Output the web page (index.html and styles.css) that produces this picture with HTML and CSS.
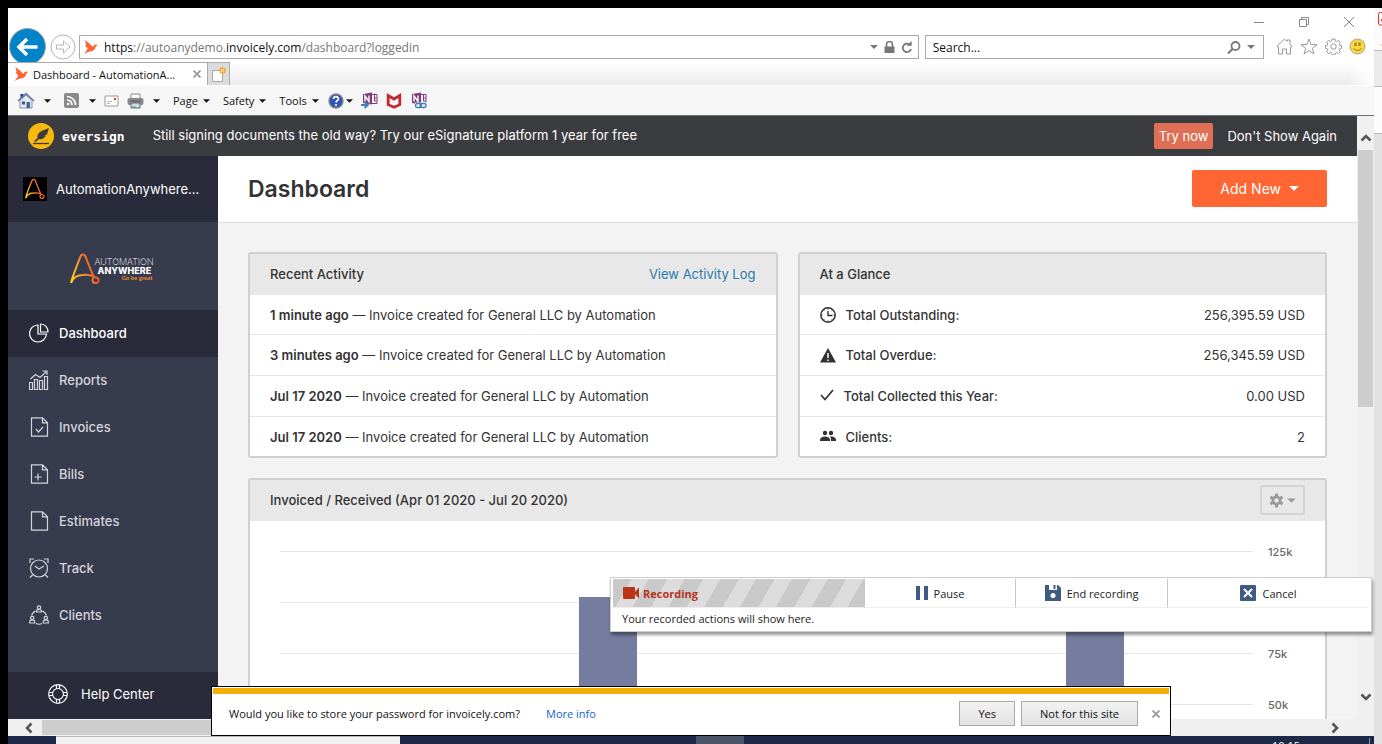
FILE: index.html
```html
<!DOCTYPE html>
<html lang="en">
<head>
<meta charset="utf-8">
<title>Dashboard - AutomationAnywhere</title>
<link rel="stylesheet" href="styles.css">
</head>
<body>
<svg class="defs" aria-hidden="true">
  <defs>
    <linearGradient id="flame" x1="0" y1="1" x2="1" y2="0.6"><stop offset="0" stop-color="#ffd21c"/><stop offset="0.5" stop-color="#f7902b"/><stop offset="1" stop-color="#ee4a23"/></linearGradient>
    <symbol id="caret" viewBox="0 0 8 4"><path d="M0 0h8L4 4z" fill="currentColor"/></symbol>
    <symbol id="bird" viewBox="0 0 14 14"><path d="M1 0l5 4 3 3 1-2 2-.5 2 .8-2 .7-1 3-2.500 2L4 12 0 14l3-4 .5-2L1 6l1-1z" fill="#ff6434"/></symbol>
    <symbol id="anywhere" viewBox="0 0 30 32"><path d="M1 30C2 25 9 7 11 2.500q2-2 4 0C17 7 21 18 24 24M1 30q3-8 12-8 7-1 13 2.500c4 1 3 6-.5 5.500-3 0-4-3-1.500-6" fill="none" stroke="url(#flame)" stroke-width="2"/></symbol>
    <symbol id="onenote" viewBox="0 0 17 17"><path d="M2 2l9-1.500v12L2 11z" fill="#80397b"/><path d="M4 9.500V4l4 5.500V3.500" fill="none" stroke="#fff" stroke-width="1.400"/><path d="M11 2.500h5v9h-5M13.500 3v3h2M13.500 6v3h2" fill="none" stroke="#80397b"/></symbol>
  </defs>
</svg>
<div class="desktop">
  <div class="window">
    <header class="caption">
      <button aria-label="Minimize"><svg width="12" height="12" viewBox="0 0 12 12"><path d="M1 6.500h10" stroke="#888"/></svg></button>
      <button aria-label="Restore"><svg width="12" height="12" viewBox="0 0 12 12" fill="none" stroke="#888"><path d="M1.500 3.500h7v7h-7zM3.500 3V1.500h7v7H9"/></svg></button>
      <button aria-label="Close"><svg width="12" height="12" viewBox="0 0 12 12"><path d="M1 1l10 10M11 1L1 11" stroke="#888"/></svg></button>
    </header>
    <div class="navrow">
      <button class="back" aria-label="Back"><svg width="39" height="34" viewBox="0 0 39 34"><circle cx="19.500" cy="18.500" r="18" fill="#0083c7" stroke="#a5a5a5"/><path d="M29.500 19H12M19 11l-8 8 8 8" fill="none" stroke="#fff" stroke-width="3.500"/></svg></button>
      <button class="forward" aria-label="Forward"><svg width="26" height="26" viewBox="0 0 26 26" fill="none" stroke="#b4b4b4"><circle cx="13" cy="13" r="12"/><path d="M6.500 11h7V7l6.500 6-6.500 6v-4h-7z"/></svg></button>
      <div class="field address">
        <svg width="14" height="14"><use href="#bird"/></svg>
        <span class="url"><b>https</b>://autoanydemo.<b>invoicely.com</b>/dashboard?loggedin</span>
        <button aria-label="Show address list"><svg width="8" height="4"><use href="#caret"/></svg></button>
        <svg width="11" height="12" viewBox="0 0 11 12"><path d="M2.500 6V3.500a3 3 0 016 0V6" fill="none" stroke="#777" stroke-width="1.600"/><path d="M.5 5.500h10V12H.5z" fill="#777"/></svg>
        <button aria-label="Refresh"><svg width="12" height="13" viewBox="0 0 12 13"><path d="M9 4A4.200 4.200 0 1010 8" fill="none" stroke="#777" stroke-width="1.800"/><path d="M5.500 4.800h5.200V0z" fill="#777"/></svg></button>
      </div>
      <div class="field search">
        <input type="text" placeholder="Search..." aria-label="Search">
        <button aria-label="Search"><svg width="14" height="13" viewBox="0 0 14 13"><circle cx="8.500" cy="5" r="4" fill="none" stroke="#777" stroke-width="1.800"/><path d="M5.500 8L1 12.500" stroke="#777" stroke-width="2"/></svg></button>
        <button aria-label="Search options"><svg width="8" height="4"><use href="#caret"/></svg></button>
      </div>
      <div class="tools">
        <button aria-label="Home"><svg width="17" height="17" viewBox="0 0 17 17" fill="none" stroke="#999"><path d="M2.500 9L.8 8.500 8.500 1l2.500 2.500V2h3v4.500l2.200 2-1.700.5v7h-4v-5h-4v5h-4z"/></svg></button>
        <button aria-label="Favorites"><svg width="18" height="17" viewBox="0 0 18 17" fill="none" stroke="#999"><path d="M9 1l2 5.500 6 .2-4.700 3.700L14 16l-5-3.300L4 16l1.700-5.600L1 6.700l6-.2z"/></svg></button>
        <button aria-label="Settings"><svg width="17" height="17" viewBox="0 0 17 17" fill="none" stroke="#999"><circle cx="8.500" cy="8.500" r="2.700"/><path d="M7 1h3l.4 2 1.200.6 1.800-1.200 1.900 2-1.100 1.700.5 1.200 1.900.4v2.500l-2 .5-.5 1.200 1.100 1.800-1.900 1.900-1.700-1.100-1.200.5-.4 1.900H7l-.4-2-1.200-.4-1.800 1.100-1.900-2 1.100-1.700-.5-1.200-1.900-.4V7.700l2-.5.5-1.200-1.100-1.700 1.900-1.900 1.700 1.100 1.200-.5z"/></svg></button>
        <button aria-label="Feedback"><svg width="17" height="17" viewBox="0 0 17 17"><circle cx="8.500" cy="8.500" r="7.500" fill="#fad73c" stroke="#a9a48c"/><path d="M6 4.500V8M7 4.500V8M10 4.500V8M11 4.500V8" stroke="#77652a" stroke-width=".9"/><path d="M4.500 10.500q4 4 8 0" fill="none" stroke="#8d7420"/></svg></button>
      </div>
    </div>
    <div class="tabs">
      <div class="tab"><svg width="15" height="14"><use href="#bird"/></svg><span>Dashboard - AutomationA...</span><button aria-label="Close tab"><svg width="8" height="8" viewBox="0 0 8 8"><path d="M.5.5l7 7M7.500.5l-7 7" stroke="#999" stroke-width="1.800"/></svg></button></div>
      <button class="newtab" aria-label="New tab"><svg width="16" height="17" viewBox="0 0 16 17"><path d="M1.500 4.500h10v11h-10z" fill="#fdfdfd" stroke="#aaa"/><path d="M11.500 1v7M8 4.500h7M9 2l5 5M14 2L9 7" stroke="#f0a01c" stroke-width="1.300"/><circle cx="11.500" cy="4.500" r="1.500" fill="#ffe28a"/></svg></button>
    </div>
    <div class="commands">
      <button class="wide" aria-label="Home page"><svg width="18" height="18" viewBox="0 0 18 18"><path d="M3.500 2h3v4h-3z" fill="#1f2fd0"/><path d="M3 8.500L9 3l6 5.500V16H3z" fill="#e6eaf1" stroke="#8091ad"/><path d="M1 9l8-7.500L17 9" fill="none" stroke="#6478a6" stroke-width="1.500"/><path d="M9.500 10H13v6H9.500z" fill="#4d6492"/><path d="M5 9.500h3v3H5z" fill="#38528d"/></svg><svg width="7" height="4"><use href="#caret"/></svg></button>
      <button class="wide feed" aria-label="Feeds"><svg width="15" height="15" viewBox="0 0 15 15"><rect width="15" height="15" rx="2" fill="#8a8a8a"/><g fill="none" stroke="#fff" stroke-width="1.700"><path d="M3 3.500a8.500 8.500 0 018.500 8.500M3 7a5 5 0 015 5"/></g><circle cx="4.200" cy="11" r="1.300" fill="#fff"/></svg><svg width="7" height="4"><use href="#caret"/></svg></button>
      <button class="mail" aria-label="Read mail"><svg width="15" height="12" viewBox="0 0 15 12"><path d="M1 1h13v10H1z" fill="#fff" stroke="#999"/><path d="M10 3h2v2h-2z" fill="#e02c2c"/><path d="M3 6.500h5M3 8.500h3" stroke="#b8b8b8"/></svg></button>
      <button class="wide print" aria-label="Print"><svg width="17" height="16" viewBox="0 0 17 16"><path d="M4 1h9v5H4z" fill="#fff" stroke="#888"/><rect x=".5" y="5" width="16" height="7" rx="2" fill="#8b8b8b"/><path d="M3 8h11" stroke="#555"/><path d="M4 10h9v5H4z" fill="#c9dde9" stroke="#666"/><path d="M5.500 14h3" stroke="#3f9e45"/></svg><svg width="7" height="4"><use href="#caret"/></svg></button>
      <button>Page<svg width="7" height="4"><use href="#caret"/></svg></button>
      <button>Safety<svg width="7" height="4"><use href="#caret"/></svg></button>
      <button>Tools<svg width="7" height="4"><use href="#caret"/></svg></button>
      <button class="help" aria-label="Help"><svg width="16" height="16" viewBox="0 0 16 16"><circle cx="8" cy="8" r="7" fill="#2c56b2" stroke="#888" stroke-width="1.400"/><path d="M5.500 6a2.500 2.300 0 115 0c0 1.500-2.500 1.500-2.500 3.500M8 11v2" fill="none" stroke="#fff" stroke-width="1.700"/></svg><svg width="7" height="4"><use href="#caret"/></svg></button>
      <button class="addon" aria-label="Send to OneNote"><svg width="17" height="17" viewBox="0 0 17 17"><use href="#onenote"/><path d="M0 13h6M3.500 10l3.500 3-3.500 3" fill="none" stroke="#3f7fb8" stroke-width="1.800"/></svg></button>
      <button class="addon" aria-label="WebAdvisor"><svg width="16" height="16" viewBox="0 0 16 16"><path d="M2.200 2.500v9.200L8 14.200l5.800-2.500V2.500L8 6z" fill="none" stroke="#c32a30" stroke-width="2.800"/></svg></button>
      <button class="addon" aria-label="Linked notes"><svg width="17" height="17" viewBox="0 0 17 17"><use href="#onenote"/><path d="M5 10.500h12V17H5z" fill="#f6f6f6"/><g fill="none" stroke="#3f7fb8" stroke-width="1.300"><rect x="5.500" y="11.500" width="6" height="4" rx="2"/><rect x="10" y="11.500" width="6" height="4" rx="2"/></g></svg></button>
    </div>
    <div class="viewport">
      <div class="page">
        <div class="promo">
          <svg width="26" height="26" viewBox="0 0 26 26"><circle cx="13" cy="13" r="13" fill="#f9b90c"/><path d="M5 20.500h16" stroke="#3a3c40" stroke-width="1.300"/><path d="M6 18l3.500-3q-1-4 4-7l7.500-3-2 6.500-2 .5.500 1.500q-3 3.500-6.500 2.500L7.500 19z" fill="#3a3c40"/></svg>
          <strong>eversign</strong>
          <p>Still signing documents the old way? Try our eSignature platform 1 year for free</p>
          <button class="try">Try now</button>
          <button class="dismiss">Don't Show Again</button>
        </div>
        <div class="app">
          <aside class="sidebar">
            <div class="org"><svg class="avatar" width="24" height="24" viewBox="-3 -2 36 36"><use href="#anywhere" width="30" height="32"/></svg><span>AutomationAnywhere...</span></div>
            <div class="brand">
              <svg width="30" height="32"><use href="#anywhere"/></svg>
              <div class="words"><span>AUTOMATION</span><b>ANYWHERE</b><i>Go be great</i></div>
            </div>
            <nav>
              <a class="current" href="#"><svg viewBox="0 0 20 20"><path d="M9 2a8.500 8.500 0 108.500 9H9z"/><path d="M11.500 1v8H19a7.500 7.500 0 00-7.500-8z"/></svg>Dashboard</a>
              <a href="#"><svg viewBox="0 0 20 20"><path d="M.5 12.500h3v7h-3zM5.500 9.500h3v10h-3zM10.500 10.500h3v9h-3zM15.500 6.500h3v13h-3zM1.500 9l5-4.500 4.500 3 6.500-6M13.500 1H18v4"/></svg>Reports</a>
              <a href="#"><svg viewBox="0 0 20 20"><path d="M2.500.8h11l5 5v13.400h-16zM13.500.8v5h5M7 12l2.500 3 4.500-5"/></svg>Invoices</a>
              <a href="#"><svg viewBox="0 0 20 20"><path d="M2.500.8h11l5 5v13.400h-16zM13.500.8v5h5M9 9.500v7M5.500 13h7"/></svg>Bills</a>
              <a href="#"><svg viewBox="0 0 20 20"><path d="M2.500.8h11l5 5v13.400h-16zM13.500.8v5h5"/></svg>Estimates</a>
              <a href="#"><svg viewBox="0 0 20 20"><circle cx="10" cy="10.500" r="8.500"/><path d="M6 8l4 3 5-3M1 5V1h4M15 1h4v4M3.500 17L1 19.500M16.500 17l2.500 2.500"/></svg>Track</a>
              <a href="#"><svg viewBox="0 0 20 20"><circle cx="10" cy="2.500" r="1.700"/><path d="M7.500 7V5.500q2.500-2 5 0V7z"/><circle cx="3.200" cy="13" r="1.700"/><path d="M.7 18v-2q2.500-2 5 0v2z"/><circle cx="16.800" cy="13" r="1.700"/><path d="M14.300 18v-2q2.500-2 5 0v2zM6.500 6Q3 8 2.700 10.500M13.500 6q3.500 2 3.800 4.500M7 18.500q3 1.500 6 0"/></svg>Clients</a>
            </nav>
            <a class="helpcenter" href="#"><svg viewBox="0 0 20 20"><circle cx="10" cy="10" r="9.300"/><circle cx="10" cy="10" r="5.500"/><path d="M8.500 1v4M11.500 1v4M8.500 15v4M11.500 15v4M1 8.500h4M1 11.500h4M15 8.500h4M15 11.500h4"/></svg>Help Center</a>
          </aside>
          <main>
            <div class="head"><h1>Dashboard</h1><button class="add">Add New<svg width="10" height="5" viewBox="0 0 8 4"><use href="#caret"/></svg></button></div>
            <div class="content">
              <div class="pair">
                <section class="panel">
                  <header><h2>Recent Activity</h2><a href="#">View Activity Log</a></header>
                  <ul>
                    <li><p><b>1 minute ago</b> — Invoice created for General LLC by Automation</p></li>
                    <li><p><b>3 minutes ago</b> — Invoice created for General LLC by Automation</p></li>
                    <li><p><b>Jul 17 2020</b> — Invoice created for General LLC by Automation</p></li>
                    <li><p><b>Jul 17 2020</b> — Invoice created for General LLC by Automation</p></li>
                  </ul>
                </section>
                <section class="panel">
                  <header><h2>At a Glance</h2></header>
                  <ul class="glance">
                    <li><svg width="16" height="16" viewBox="0 0 16 16"><circle cx="8" cy="8" r="7.200" fill="none" stroke="#333" stroke-width="1.500"/><path d="M8 4v4.500h4.500" fill="none" stroke="#333" stroke-width="1.400"/><path d="M8 1v1.500M8 13.500V15M1 8h1.500M13.500 8H15M3.500 3l.8.800M12.500 3l-.8.800M3.500 13l.8-.8M12.500 13l-.8-.8" stroke="#333"/></svg><span>Total Outstanding:</span><em>256,395.59 USD</em></li>
                    <li><svg width="16" height="16" viewBox="0 0 16 16"><path d="M8 1l8 14.500H0z" fill="#333"/><path d="M8 6v5M8 12.500v1.500" stroke="#fff" stroke-width="1.500"/></svg><span>Total Overdue:</span><em>256,345.59 USD</em></li>
                    <li><svg width="14" height="16" viewBox="0 0 14 16"><path d="M1 7l4 4.500L13 2" fill="none" stroke="#333" stroke-width="1.700"/></svg><span>Total Collected this Year:</span><em>0.00 USD</em></li>
                    <li><svg width="16" height="16" viewBox="0 0 16 16" fill="#333"><circle cx="5" cy="4" r="2.200"/><circle cx="11" cy="4" r="2.200"/><path d="M0 12V10.500q1-3 5-3t5 3V12zM11 12V10.500q0-1.500-1.200-2.800Q15 7 16 10.500V12z"/></svg><span>Clients:</span><em>2</em></li>
                  </ul>
                </section>
              </div>
              <section class="panel">
                <header><h2>Invoiced / Received (Apr 01 2020 - Jul 20 2020)</h2><button class="gear" aria-label="Chart settings"><svg width="15" height="15" viewBox="0 0 15 15"><g stroke="#999" stroke-width="3"><path d="M7.500.5v14M1.400 4l12.200 7M1.400 11l12.200-7"/></g><circle cx="7.500" cy="7.500" r="5" fill="#999"/><circle cx="7.500" cy="7.500" r="2.300" fill="#e8e8e8"/></svg><svg width="9" height="5" viewBox="0 0 8 4"><use href="#caret"/></svg></button></header>
                <div class="chart">
                  <div class="scale"><div><span>125k</span></div><div><span></span></div><div><span>75k</span></div><div><span>50k</span></div><div><span></span></div><div><span></span></div></div>
                  <div class="months">
                    <div></div>
                    <div><i style="height:210px"></i><i style="height:0"></i></div>
                    <div></div>
                    <div><i style="height:210px"></i><i style="height:0"></i></div>
                  </div>
                </div>
              </section>
            </div>
          </main>
        </div>
      </div>
      <div class="vscroll"><svg width="12" height="9" viewBox="0 0 12 9"><path d="M1.500 7.500L6 3l4.500 4.500" fill="none" stroke="#555" stroke-width="2.600"/></svg><div class="thumb"></div><svg width="12" height="9" viewBox="0 0 12 9"><path d="M1.500 1.500L6 6l4.500-4.500" fill="none" stroke="#555" stroke-width="2.600"/></svg></div>
      <div class="hscroll"><svg width="9" height="12" viewBox="0 0 9 12"><path d="M7.500 1.500L3 6l4.500 4.500" fill="none" stroke="#555" stroke-width="2.600"/></svg><div class="thumb"></div><svg width="9" height="12" viewBox="0 0 9 12"><path d="M1.500 1.500L6 6l-4.500 4.500" fill="none" stroke="#555" stroke-width="2.600"/></svg></div>
    </div>
    <div class="recorder">
      <div class="controls">
        <div class="recording"><svg width="17" height="12" viewBox="0 0 17 12" fill="#b93419"><rect width="12" height="12" rx="1"/><path d="M11 6l5-5.500v11z"/></svg>Recording</div>
        <button><svg width="12" height="14" viewBox="0 0 12 14"><path d="M0 0h4v14H0zM8 0h4v14H8z" fill="#3e5c82"/></svg>Pause</button>
        <button><svg width="16" height="16" viewBox="0 0 16 16"><path d="M0 0h13l3 3v13H0z" fill="#3e5c82"/><path d="M4 0h8v5H4z" fill="#fff"/><path d="M8.500 0h2v4h-2z" fill="#3e5c82"/><circle cx="8" cy="10.500" r="2.500" fill="#fff"/></svg>End recording</button>
        <button class="cancel"><svg width="16" height="16" viewBox="0 0 16 16"><rect width="16" height="16" rx="1" fill="#3e5c82"/><path d="M4 4l8 8M12 4l-8 8" stroke="#fff" stroke-width="2"/></svg>Cancel</button>
      </div>
      <p>Your recorded actions will show here.</p>
    </div>
    <div class="notice">
      <span>Would you like to store your password for invoicely.com?</span>
      <a href="#">More info</a>
      <button>Yes</button><button>Not for this site</button>
      <button class="close" aria-label="Close"><svg width="8" height="8" viewBox="0 0 8 8"><path d="M.5.5l7 7M7.500.5l-7 7" stroke="#999" stroke-width="1.800"/></svg></button>
    </div>
  </div>
  <div class="taskbar"><div class="find"></div><div class="task"></div><time>10:15</time></div>
  <div class="behind">
    <svg width="8" height="43" viewBox="0 0 8 43"><path d="M9 4.500H6.500a2 2 0 00-2 2v9a2 2 0 002 2H9M9 11a1.500 1.500 0 100 3" fill="none" stroke="#e5261f"/><path d="M7 38l1-1v2z" fill="#e8a33a"/></svg>
    <div class="strip"></div><div class="gap"></div>
  </div>
</div>
</body>
</html>
```
FILE: styles.css
```css
* { box-sizing: border-box; margin: 0; padding: 0; }
body { background: #000; font-family: Inter, "Liberation Sans", sans-serif; font-size: 13px; color: #333; }
button { border: 0; background: none; font: inherit; color: inherit; display: flex; align-items: center; }
a { color: inherit; text-decoration: none; }
svg { display: block; flex: none; }
ul { list-style: none; }
.defs { position: absolute; width: 0; height: 0; }
.desktop { height: 100vh; padding: 8px 0 0 8px; display: grid; grid-template-columns: minmax(0, 1fr) 8px; grid-template-rows: minmax(0, 1fr) 8px; overflow: hidden; }
.window { position: relative; display: flex; flex-direction: column; background: #fff; min-height: 0; }

.caption, .navrow, .tabs, .commands, .recorder, .notice { font-family: "Open Sans", "Noto Sans", sans-serif; font-size: 12px; }
.caption { height: 20px; display: flex; justify-content: flex-end; align-items: flex-end; gap: 33px; padding-right: 19px; }
.navrow { height: 34px; display: flex; align-items: flex-start; }
.forward { margin: 6px 3px 0; }
.field { height: 24px; margin-top: 7px; display: flex; align-items: center; gap: 6px; border: 1px solid #aaa; padding: 0 5px 0 4px; color: #777; }
.address { flex: 828 1 0; margin-right: 6px; }
.url { flex: 1; white-space: nowrap; overflow: hidden; }
.url b { font-weight: 400; color: #111; }
.search { flex: 322 1 0; padding: 0 8px 0 7px; }
.search input { flex: 1; min-width: 0; border: 0; outline: 0; font: inherit; background: none; }
.search input::placeholder { color: #111; opacity: 1; }
.tools { display: flex; gap: 7px; padding: 10px 8px 0 12px; }
.tabs { height: 24px; display: flex; background: linear-gradient(90deg, transparent 98%, #fff), linear-gradient(#fff, #ebebeb); border-bottom: 1px solid #fff; }
.tab { width: 199px; display: flex; align-items: center; gap: 4px; padding: 0 6px; background: #fff; border-top: 1px solid #aaa; color: #111; font-size: 11px; }
.tab span { flex: 1; white-space: nowrap; overflow: hidden; }
.newtab { width: 23px; background: #dcdcdc; border: 1px solid #aaa; border-bottom: 0; padding-left: 3px; }
.commands { height: 30px; display: flex; align-items: center; gap: 13px; background: #f6f6f6; border-bottom: 1px solid #6f7073; padding-left: 9px; color: #111; font-size: 11px; }
.commands button { gap: 5px; }
.commands .wide { gap: 9px; }
.commands .feed { gap: 10px; }
.commands .mail, .commands .print, .commands .addon { margin-left: -5px; }
.commands .help { gap: 2px; margin-left: -4px; }

.viewport { flex: 1; min-height: 0; display: grid; grid-template-columns: minmax(0, 1fr) 17px; grid-template-rows: minmax(0, 1fr) 17px; background: #f0f0f0; }
.page { display: flex; flex-direction: column; overflow: hidden; background: #f3f3f3; }
.vscroll { display: flex; flex-direction: column; align-items: center; justify-content: space-between; padding: 17px 1px 17px; }
.vscroll .thumb { width: 15px; height: 257px; margin: 8px 0 auto; background: #cdcdcd; }
.hscroll { display: flex; align-items: center; padding: 0 17px 0 16px; }
.hscroll .thumb { width: 84%; height: 15px; margin: 0 auto 0 9px; background: #cdcdcd; }

.promo { height: 40px; flex: none; display: flex; align-items: center; padding: 0 20px; background: #3a3c40; color: #fff; }
.promo strong { margin-left: 8px; font: 700 13px "DejaVu Sans Mono", monospace; }
.promo p { flex: 1; margin-left: 28px; padding-bottom: 2px; white-space: nowrap; }
.promo .try { height: 26px; padding: 0 5px; background: #e07055; border-radius: 2px; }
.promo .dismiss { margin-left: 14px; }
.app { flex: 1; min-height: 0; display: grid; grid-template-columns: 210px minmax(0, 1fr); }
.sidebar { display: flex; flex-direction: column; background: #373b4e; color: #d4d5da; }
.org { height: 66px; display: flex; align-items: center; gap: 9px; padding-left: 15px; background: #292b3a; color: #fff; }
.avatar { background: #000; }
.brand { height: 88px; display: flex; align-items: center; justify-content: center; padding: 5px 4px 0 0; color: #fff; }
.words { display: flex; flex-direction: column; width: 58px; margin-left: -5px; font-size: 9px; line-height: 9px; }
.words span { font-weight: 200; }
.words b { margin-left: 3px; font-weight: 800; }
.words i { font: 700 6px/6px Lato, sans-serif; color: #f08a2b; align-self: flex-end; }
nav a { height: 47px; display: flex; align-items: center; gap: 10px; padding: 0 0 2px 21px; font-weight: 500; }
nav a.current { background: #292b3a; color: #fff; }
nav svg, .helpcenter svg { width: 20px; height: 20px; fill: none; stroke: currentColor; stroke-width: 1.2; }
.helpcenter { height: 47px; margin-top: auto; display: flex; align-items: center; gap: 13px; padding: 0 0 3px 40px; background: #292b3a; color: #fff; }

main { min-width: 0; overflow: hidden; }
.head { height: 67px; display: flex; align-items: center; justify-content: space-between; padding: 0 30px 1px; background: #fff; border-bottom: 1px solid #ddd; }
h1 { font-size: 23px; font-weight: 600; }
.add { height: 37px; gap: 8px; padding: 0 28px; background: #ff6633; color: #fff; border-radius: 2px; font-size: 14px; }
.content { display: flex; flex-direction: column; gap: 20px; padding: 29px 30px; }
.pair { display: grid; grid-template-columns: 1fr 1fr; gap: 20px; }
.panel { border: 2px solid #d0d0d0; border-radius: 3px; background: #fff; }
.panel header { height: 41px; display: flex; align-items: center; justify-content: space-between; padding: 0 20px 1px; background: #e8e8e8; }
h2 { font-size: 13px; font-weight: 500; }
.panel header a { color: #2a7aab; }
.panel li { height: 41px; display: flex; align-items: center; padding: 0 20px; border-bottom: 1px solid #e6e6e6; white-space: nowrap; }
.panel li:first-child { height: 40px; }
.panel li:last-child { height: 39px; border-bottom: 0; }
.panel b { font-weight: 600; }
.glance svg { margin-right: 10px; }
.glance span { flex: 1; font-weight: 500; }
.glance em { font-style: normal; }
.gear { height: 30px; gap: 3px; padding: 0 7px; border: 2px solid #d4d4d4; border-radius: 2px; color: #999; }
.chart { display: grid; padding: 5px 30px 20px; }
.scale, .months { grid-area: 1 / 1; }
.scale div { height: 51px; display: flex; align-items: center; gap: 15px; font-size: 11px; font-weight: 500; color: #666; }
.scale div::before { content: ""; flex: 1; height: 1px; background: #e6e6e6; }
.scale span { width: 27px; }
.months { display: grid; grid-template-columns: repeat(4, 1fr); margin: 25px 42px 25px 0; }
.months div { display: flex; align-items: flex-end; justify-content: center; gap: 15px; }
.months i { width: 58px; background: #757c9d; }

.recorder { position: absolute; right: 2px; bottom: 104px; width: 762px; height: 55px; padding: 1px 2px 2px; background: #fff; border: 1px solid #ccc; box-shadow: 1px 3px 3px rgba(0,0,0,.4); font-size: 11px; color: #222; }
.controls { height: 29px; display: grid; grid-template-columns: 252px 151px 152px 1fr; }
.controls > * { display: flex; align-items: center; justify-content: center; gap: 6px; border-right: 1px solid #c8c8c8; border-bottom: 1px solid #eee; }
.controls .cancel { border-right: 0; }
.controls .recording { justify-content: flex-start; padding-left: 10px; gap: 3px; font-weight: 700; color: #b93419; background: repeating-linear-gradient(120deg, #c9c9c9 0 16px, #dcdcdc 16px 31px); }
.recorder p { padding: 3px 9px; }
.notice { position: absolute; left: 203px; right: 203px; bottom: 0; height: 50px; display: flex; align-items: center; gap: 6px; padding: 4px 10px 0 17px; background: linear-gradient(#f3b000, #f3b000) 1px 1px / calc(100% - 2px) 6px no-repeat #fff; border: 1px solid #000; font-size: 11px; color: #111; white-space: nowrap; }
.notice a { margin: 0 auto 0 20px; color: #0f66c9; }
.notice button { height: 25px; padding: 0 18px; border: 1px solid #aaa; background: linear-gradient(#f2f2f2, #e2e2e2); }
.notice .close { border: 0; background: none; padding: 2px 0 0 8px; }
.taskbar { display: flex; align-items: flex-start; background: #1d2947; overflow: hidden; padding-left: 48px; }
.find { width: 344px; height: 8px; background: #f2f2f2; border-top: 1px solid #bbb; }
.task { width: 48px; height: 8px; margin-left: 296px; background: #4b5468; }
.taskbar time { margin: 2px 4px 0 auto; padding-right: 69px; border-right: 1px solid #8d95a6; font: 11px "Open Sans", sans-serif; color: #fff; }
.behind { grid-column: 2; grid-row: 1 / 3; display: flex; flex-direction: column; background: #e2e2e2; }
.behind svg { background: #fafafa; border-bottom: 1px solid #bbb; }
.strip { height: 36px; border-bottom: 1px solid #bbb; background: #eaeaea; }
.gap { height: 47px; background: #fcfcfc; border-bottom: 1px solid #bbb; }
```
